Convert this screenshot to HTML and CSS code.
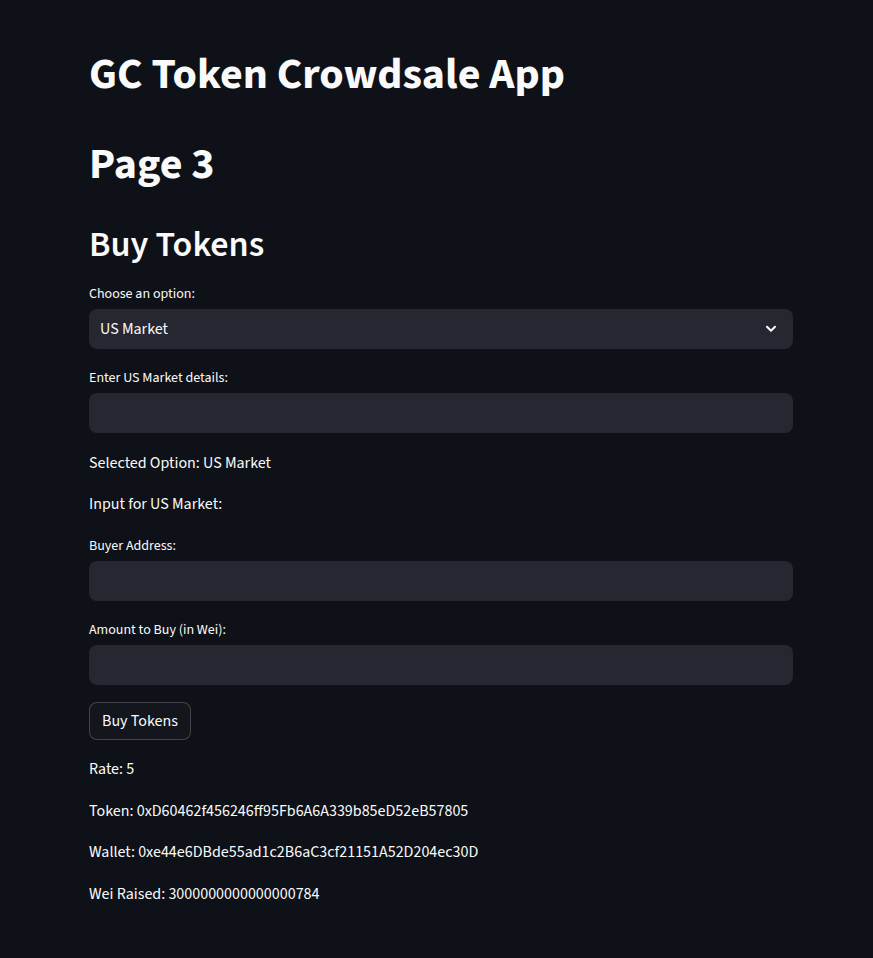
FILE: index.html
```html
<!DOCTYPE html>
<html lang="en">
<head>
<meta charset="utf-8">
<title>GC Token Crowdsale App</title>
<link rel="stylesheet" href="styles.css">
</head>
<body>
<main class="main">
  <h1 class="title">GC Token Crowdsale App</h1>
  <h1 class="title page">Page 3</h1>
  <h2 class="subtitle">Buy Tokens</h2>

  <div class="field">
    <label class="label">Choose an option:</label>
    <div class="select">
      <span>US Market</span>
      <svg class="chev" width="12" height="8" viewBox="0 0 12 8"><path d="M2 1.75 L6 5.75 L10 1.75" fill="none" stroke="#fafafa" stroke-width="2" stroke-linecap="round" stroke-linejoin="round"/></svg>
    </div>
  </div>

  <div class="field">
    <label class="label">Enter US Market details:</label>
    <div class="input"></div>
  </div>

  <p class="text">Selected Option: US Market</p>
  <p class="text">Input for US Market:</p>

  <div class="field">
    <label class="label">Buyer Address:</label>
    <div class="input"></div>
  </div>

  <div class="field">
    <label class="label">Amount to Buy (in Wei):</label>
    <div class="input"></div>
  </div>

  <div class="btn-row"><button class="btn">Buy Tokens</button></div>

  <p class="text">Rate: 5</p>
  <p class="text info">Token: 0xD60462f456246ff95Fb6A6A339b85eD52eB57805</p>
  <p class="text info">Wallet: 0xe44e6DBde55ad1c2B6aC3cf21151A52D204ec30D</p>
  <p class="text info">Wei Raised: 3000000000000000784</p>
</main>
</body>
</html>
```

FILE: styles.css
```css
* { box-sizing: border-box; }
html, body {
  margin: 0;
  padding: 0;
  background: #0e1117;
  color: #fafafa;
  font-family: "Source Sans Pro", "Source Sans 3", Lato, "Noto Sans", sans-serif;
}
.main {
  width: 704px;
  margin-left: 89px;
  padding-top: 48px;
  display: flex;
  flex-direction: column;
}
.title {
  margin: 0;
  font-size: 44px;
  font-weight: 700;
  line-height: 54px;
  height: 54px;
}
.page {
  margin-top: 36px;
}
.subtitle {
  margin: 31px 0 0 0;
  font-size: 36px;
  font-weight: 600;
  line-height: 44px;
  height: 44px;
}
.field {
  display: flex;
  flex-direction: column;
  margin-top: 17px;
}
.field + .field { margin-top: 19px; }
.label {
  font-size: 14px;
  line-height: 20px;
  height: 20px;
  margin-bottom: 5px;
}
.select, .input {
  height: 40px;
  background: #262730;
  border-radius: 8px;
}
.select {
  display: flex;
  align-items: center;
  justify-content: space-between;
  padding: 0 16px 0 11px;
  font-size: 16px;
}
.chev { display: block; }
.text {
  margin: 0;
  font-size: 16px;
  line-height: 24px;
  height: 24px;
  margin-top: 17px;
}
.text.info { margin-top: 17.6px; }
.field + .text { margin-top: 18px; }
.text + .field { margin-top: 20px; }
.btn-row {
  margin-top: 17px;
  display: flex;
}
.btn {
  font-family: inherit;
  font-size: 16px;
  color: #fafafa;
  background: #13161d;
  border: 1px solid rgba(250, 250, 250, 0.2);
  border-radius: 8px;
  height: 38px;
  padding: 0 12px;
}
.btn-row + .text { margin-top: 17px; }
```
